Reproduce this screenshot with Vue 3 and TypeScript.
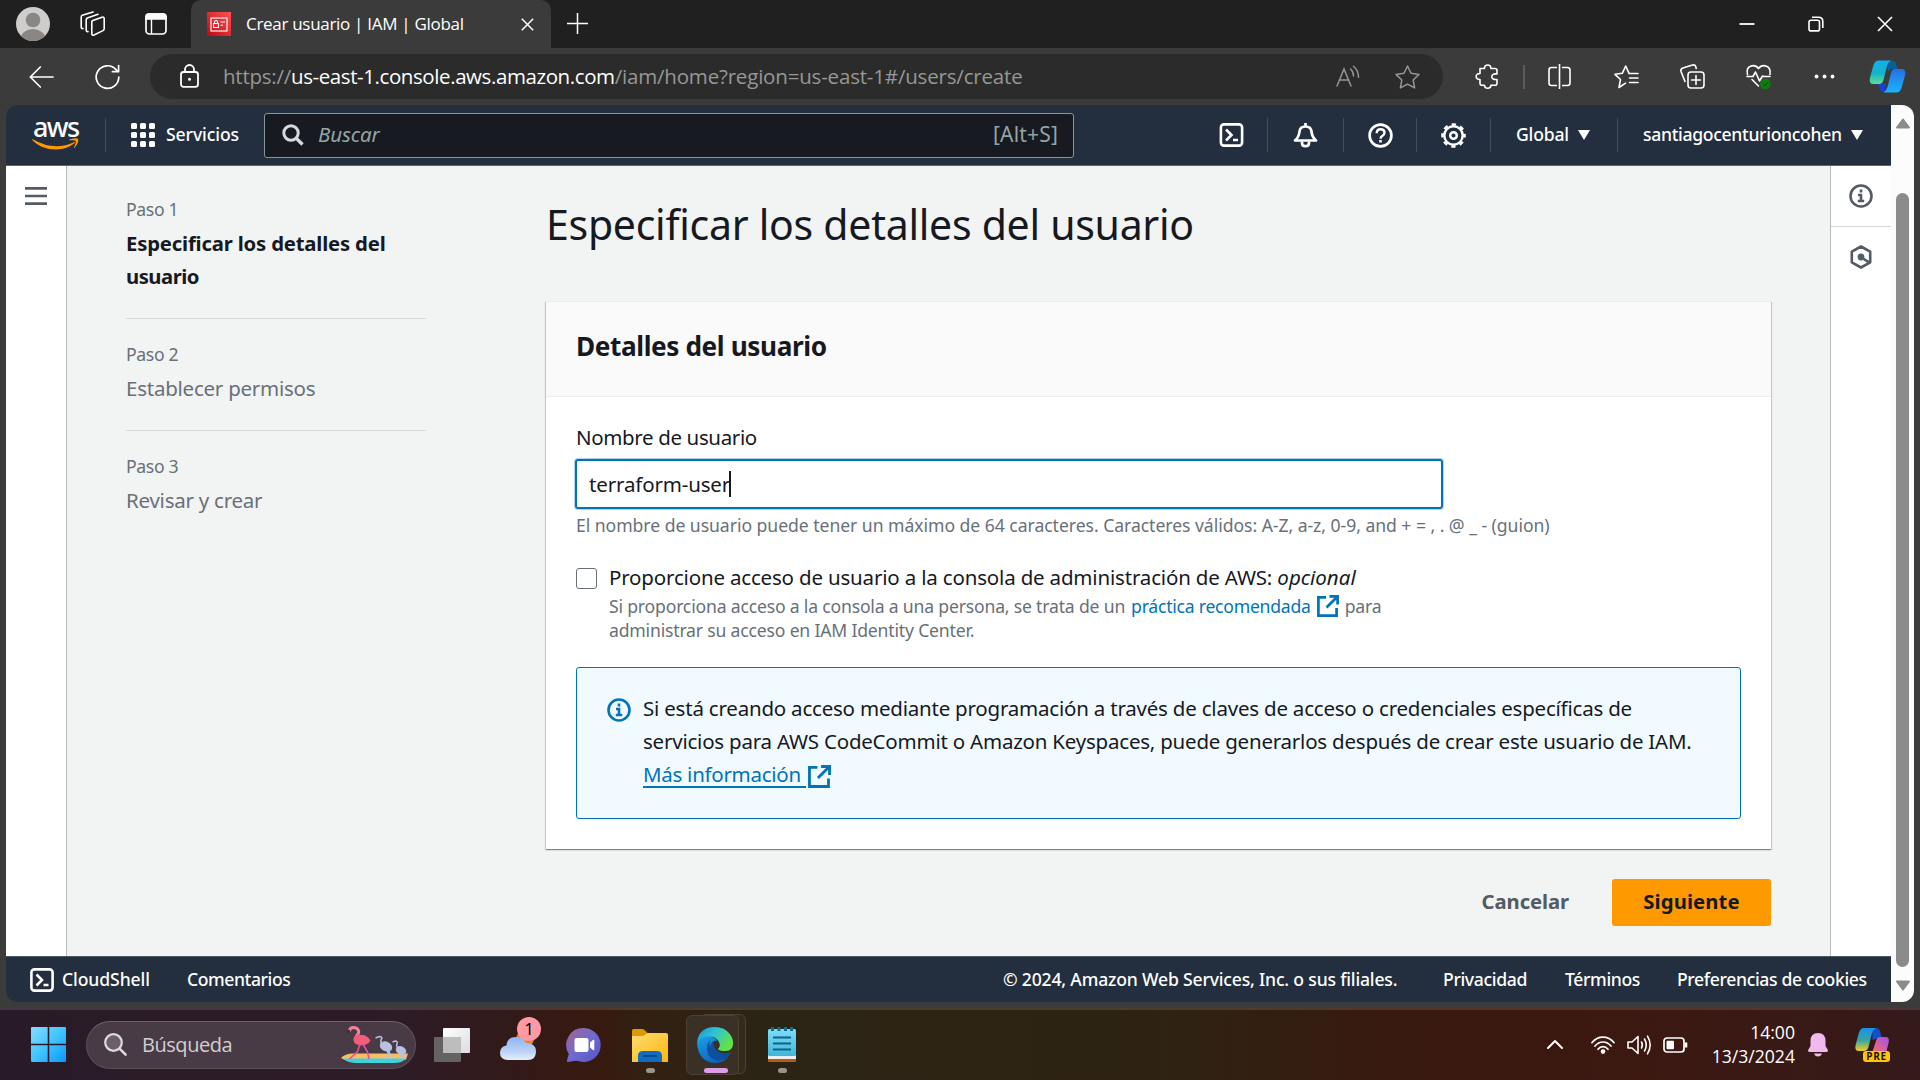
<script setup lang="ts">
interface Step {
  label: string
  title: string[]
  active: boolean
}

const steps: Step[] = [
  { label: 'Paso 1', title: ['Especificar los detalles del', 'usuario'], active: true },
  { label: 'Paso 2', title: ['Establecer permisos'], active: false },
  { label: 'Paso 3', title: ['Revisar y crear'], active: false },
]

const dots: number[] = [0, 1, 2, 3, 4, 5, 6, 7, 8]
</script>

<template>
  <div class="screen">
    <!-- Browser tab strip -->
    <div class="tabstrip">
      <svg class="avatar" width="34" height="34" viewBox="0 0 34 34">
        <defs><clipPath id="av"><circle cx="17" cy="17" r="17" /></clipPath></defs>
        <g clip-path="url(#av)">
          <rect width="34" height="34" fill="#cfcdcb" />
          <circle cx="17" cy="13" r="7.3" fill="#8a8684" />
          <ellipse cx="17" cy="32" rx="12.5" ry="10" fill="#8a8684" />
        </g>
      </svg>
      <svg class="workspaces" width="26" height="26" viewBox="0 0 26 26" fill="none" stroke="#fff" stroke-width="1.6" stroke-linejoin="round" stroke-linecap="round">
        <path d="M12.8 9.6 22 6.2q2.2-.6 2.2 1.600v10q0 1.300-1.200 1.800L14 24q-2.200.8-2.200-1.400V11q0-1 1-1.400Z" />
        <path d="M8 20.600q-1.800.2-1.800-1.700V8.800q0-1.200 1.100-1.700L18 3.200" />
        <path d="M3 17.600q-1.800 0-1.800-1.700V6q0-1.200 1.100-1.700L13 .9" />
      </svg>
      <svg class="tabactions" width="22" height="22" viewBox="0 0 22 22" fill="none" stroke="#fff" stroke-width="1.700">
        <rect x="1" y="1" width="20" height="20" rx="3.500" />
        <path d="M1 3.500Q1 1 3.500 1h15Q21 1 21 3.500V6H1Z" fill="#fff" />
        <path d="M6.500 6v15" stroke-width="1.400" />
      </svg>
      <div class="tab">
        <svg width="24" height="24" viewBox="0 0 24 24">
          <defs><linearGradient id="fav" x1="0" y1="1" x2="1" y2="0"><stop offset="0" stop-color="#bd0816" /><stop offset="1" stop-color="#ff5252" /></linearGradient></defs>
          <rect width="24" height="24" fill="url(#fav)" />
          <g fill="none" stroke="#fff" stroke-width="1.100">
            <rect x="4" y="6" width="16" height="13" />
            <rect x="6.500" y="11.500" width="5" height="4" />
            <path d="M7.500 11.500V9.800q0-1.300 1.500-1.300t1.500 1.300v1.700M13.500 10h4.500M13.500 13.300h2.500" />
          </g>
        </svg>
        <span class="tab-title">Crear usuario | IAM | Global</span>
        <svg class="tab-close" width="13" height="13" viewBox="0 0 13 13" stroke="#fff" stroke-width="1.500"><path d="M.8.8l11.400 11.400M12.200.8.8 12.200" /></svg>
      </div>
      <svg class="newtab" width="21" height="21" viewBox="0 0 21 21" stroke="#fff" stroke-width="1.500"><path d="M10.500 0v21M0 10.500h21" /></svg>
      <div class="winbtns">
        <svg width="16" height="16" viewBox="0 0 16 16" stroke="#fff" stroke-width="1.800"><path d="M.5 8h15" /></svg>
        <svg width="16" height="16" viewBox="0 0 16 16" fill="none" stroke="#fff" stroke-width="1.600"><rect x="1" y="4.200" width="10.500" height="10.700" rx="2" /><path d="M4 1.200h6.500q4.300 0 4.300 4.300V12" /></svg>
        <svg width="16" height="16" viewBox="0 0 16 16" stroke="#fff" stroke-width="1.600"><path d="M1 1l14 14M15 1 1 15" /></svg>
      </div>
    </div>

    <!-- Browser toolbar -->
    <div class="toolbar">
      <svg class="back" width="25" height="22" viewBox="0 0 25 22" fill="none" stroke="#fff" stroke-width="1.700" stroke-linecap="round" stroke-linejoin="round"><path d="M24 11H1.300M11.300 1 1.300 11l10 10" /></svg>
      <svg class="reload" width="25" height="26" viewBox="0 0 25 26" fill="none" stroke="#fff" stroke-width="1.700" stroke-linecap="round" stroke-linejoin="round"><path d="M23.800 13A11.300 11.300 0 1 1 21 5.600l2.500 2M23.600 1.500v6.200h-6.200" /></svg>
      <div class="omnibox">
        <svg class="lock" width="19" height="24" viewBox="0 0 19 24" fill="none" stroke="#fff" stroke-width="1.800"><rect x="1" y="8" width="17" height="14.800" rx="2.500" /><path d="M5 8V5.500a4.500 4.500 0 0 1 9 0V8" /><circle cx="9.500" cy="15.300" r="1.500" fill="#fff" stroke="none" /></svg>
        <span class="url"><span class="u1">https://</span><span class="u2">us-east-1.console.aws.amazon.com</span><span class="u3">/iam/home?region=us-east-1#/users/create</span></span>
        <svg class="readaloud" width="24" height="24" viewBox="0 0 24 24" fill="none" stroke="#959595" stroke-width="1.500" stroke-linecap="round"><path d="M1 21 8 4l7 17M3.700 15h8.700M14.500 4q3 2.500 3 7M17.500 1.200q5 4.300 5 11" /></svg>
        <svg class="star" width="25" height="24" viewBox="0 0 25 24" fill="none" stroke="#959595" stroke-width="1.500" stroke-linejoin="round"><path d="m12.500 1 3.500 7.300 8 1.100-5.800 5.600 1.400 7.900-7.100-3.800-7.100 3.800 1.400-7.900L1 9.400l8-1.100Z" /></svg>
      </div>
      <svg class="puzzle" width="24" height="25" viewBox="0 0 24 25" fill="none" stroke="#fff" stroke-width="1.600" stroke-linejoin="round"><path d="M5 4.500h4.500q0-3.500 3.200-3.500t3.200 3.500H20q2 0 2 2V10q-5.200-.6-5.200 2.700T22 15.500v3.700q0 2-2 2h-4.100q0 3-3.200 3t-3.200-3H7q-2 0-2-2v-3.700q-3.800 0-3.800-3T5 9.500Z" /></svg>
      <i class="tsep"></i>
      <svg class="split" width="23" height="25" viewBox="0 0 23 25" fill="none" stroke="#fff" stroke-width="1.600"><path d="M9 3.500H3.500q-2.500 0-2.500 2.500v13q0 2.500 2.500 2.500H9M14 3.500h5.500q2.500 0 2.500 2.500v13q0 2.500-2.500 2.500H14M11.500 0v25" /></svg>
      <svg class="favs" width="25" height="24" viewBox="0 0 25 24" fill="none" stroke="#fff" stroke-width="1.600" stroke-linejoin="round" stroke-linecap="round"><path d="M11.500 18.200 5 22.500l1.500-8L1 9.300l7.300-1L11.700 1l3.300 7.300M15.500 8.500H24M15.500 13H24M15.500 17.500H24" /></svg>
      <svg class="collections" width="25" height="25" viewBox="0 0 25 25" fill="none" stroke="#fff" stroke-width="1.600" stroke-linejoin="round" stroke-linecap="round"><rect x="8" y="8" width="16" height="16" rx="3" /><path d="M16 11.500v9M11.500 16h9M5 17.500 1 7.500Q.3 5 2.800 4L12.500 1q2.500-.6 3.300 1.700l.4 1.800" /></svg>
      <svg class="heart" width="26" height="26" viewBox="0 0 26 26" fill="none" stroke="#fff" stroke-width="1.600" stroke-linejoin="round" stroke-linecap="round"><path d="M1.500 10.500Q0 4 4.500 2.200 9.500.3 12.500 4.500 15.500.3 20.500 2.200 25 4 24 10.500M1 12.500h6l2.500-4.500 4 9 3-5 1 .5H24M6 15.500l6.500 6.500" /><circle cx="19.500" cy="20" r="5.400" fill="#0f7b0f" stroke="none" /><path d="m17 20 1.800 1.800 3.400-3.600" stroke="#053f05" stroke-width="1" /></svg>
      <svg class="more" width="21" height="5" viewBox="0 0 21 5" fill="#fff"><circle cx="2.500" cy="2.500" r="1.900" /><circle cx="10.500" cy="2.500" r="1.900" /><circle cx="18.500" cy="2.500" r="1.900" /></svg>
      <svg class="copilot" width="37" height="33" viewBox="0 0 37 33">
        <defs>
          <linearGradient id="cp1" x1="0" y1="0" x2="0" y2="1"><stop offset="0" stop-color="#12aeea" /><stop offset=".55" stop-color="#13b4cc" /><stop offset="1" stop-color="#5fe08f" /></linearGradient>
          <linearGradient id="cp2" x1="0" y1="0" x2="0" y2="1"><stop offset="0" stop-color="#2a6fe0" /><stop offset="1" stop-color="#18b4ff" /></linearGradient>
        </defs>
        <path d="M18 1h5q3.500 0 4.500 4l1 4h-5q-3 0-4.500 3Z" fill="#0c5f96" />
        <path d="M9 24h8l-1 8h-1.500q-3 0-4-3.500Z" fill="#1b3fd6" />
        <path d="M9.500.5H22q-3 1.500-4 5.500l-3.500 14q-1 4-4.500 4H4.500Q0 24 .8 18.500L4.500 5Q6 .5 9.500.5Z" fill="url(#cp1)" />
        <path d="M27.500 32.500H14.500q3-1.500 4-5.500L22 13q1-4 4.500-4h6q4.500 0 3.700 5.500L32.500 28q-1.500 4.500-5 4.500Z" fill="url(#cp2)" />
      </svg>
    </div>

    <!-- Web page -->
    <div class="viewport">
      <div class="page">
        <header class="aws-header">
          <div class="logo">
            <span>aws</span>
            <svg width="48" height="14" viewBox="0 0 48 14"><path d="M.8 2.200Q22 14.500 42 5.200q1.500-.5.700.9Q35 12.500 24 12.500 9 12.500.4 3.200-.3 2 .8 2.200Z" fill="#f90" /><path d="M37.500 2.600q6.800-2.500 8.500-.6 1.600 2.200-3.300 8.700-1 .7-.7-.3 2.300-5.500 1.700-6.500-.9-1-6.200-.6-.9-.1 0-.7Z" fill="#f90" /></svg>
          </div>
          <i class="hsep s1"></i>
          <div class="waffle"><b v-for="d in dots" :key="d"></b></div>
          <span class="servicios">Servicios</span>
          <div class="search">
            <svg width="22" height="22" viewBox="0 0 22 22" fill="none" stroke="#d5dbdb" stroke-width="3"><circle cx="9" cy="9" r="7.200" /><path d="m14 14 6.500 6.500" stroke-width="3.400" /></svg>
            <span class="ph">Buscar</span>
            <span class="kbd">[Alt+S]</span>
          </div>
          <svg class="h-cs" width="25" height="24" viewBox="0 0 24 24" fill="none" stroke="#fff" stroke-width="2.600"><rect x="1.400" y="1.400" width="21.200" height="21.200" rx="3" /><path d="m6.500 6.500 5.500 5.500-5.500 5.500" /><path d="M13.500 17h5" /></svg>
          <i class="hsep s2"></i>
          <svg class="h-bell" width="25" height="25" viewBox="0 0 25 25" fill="none" stroke="#fff" stroke-width="2.700" stroke-linejoin="round"><path d="M2 17.500q4-3.500 4.500-9Q7 3.500 12.500 3.500t6 5q.5 5.500 4.500 9Z" /><path d="M12.500 0v4" /><path d="M9 18.500v1.500q0 3.200 3.500 3.200T16 20v-1.500" /></svg>
          <i class="hsep s3"></i>
          <svg class="h-help" width="25" height="25" viewBox="0 0 25 25" fill="none" stroke="#fff" stroke-width="2.700"><circle cx="12.500" cy="12.500" r="10.900" /><path d="M8.700 10.200q0-4 3.900-4 3.900 0 3.900 3.300 0 2-2 3.200-2 1.100-2 3.100" stroke-width="2.400" /><path d="M12.500 17v2.600" stroke-width="2.600" /></svg>
          <i class="hsep s4"></i>
          <svg class="h-gear" width="25" height="25" viewBox="0 0 25 25" fill="none" stroke="#fff"><circle cx="12.500" cy="12.500" r="9.200" stroke-width="2.400" /><circle cx="12.500" cy="12.500" r="11" stroke-width="2.600" stroke-dasharray="4.320 4.320" stroke-dashoffset="2.160" /><circle cx="12.500" cy="12.500" r="3.300" stroke-width="2.500" /></svg>
          <i class="hsep s5"></i>
          <span class="region">Global</span>
          <svg class="caret c1" width="12" height="10" viewBox="0 0 12 10"><path d="M0 0h12L6 10Z" fill="#fff" /></svg>
          <i class="hsep s6"></i>
          <span class="account">santiagocenturioncohen</span>
          <svg class="caret c2" width="12" height="10" viewBox="0 0 12 10"><path d="M0 0h12L6 10Z" fill="#fff" /></svg>
        </header>

        <div class="body">
          <aside class="rail left">
            <svg width="22" height="18" viewBox="0 0 22 18" stroke="#545b64" stroke-width="2.600"><path d="M0 1.400h22M0 9h22M0 16.600h22" /></svg>
          </aside>

          <nav class="steps">
            <div v-for="s in steps" :key="s.label" class="step" :class="{ active: s.active }">
              <small>{{ s.label }}</small>
              <span v-for="t in s.title" :key="t">{{ t }}</span>
            </div>
          </nav>

          <main class="content">
            <h1>Especificar los detalles del usuario</h1>
            <section class="card">
              <h2>Detalles del usuario</h2>
              <div class="card-body">
                <label class="name">Nombre de usuario</label>
                <div class="input"><span>terraform-user</span><i></i></div>
                <p class="hint">El nombre de usuario puede tener un máximo de 64 caracteres. Caracteres válidos: A-Z, a-z, 0-9, and + = , . @ _ - (guion)</p>
                <div class="check">
                  <div class="box"></div>
                  <div>
                    <div class="check-label">Proporcione acceso de usuario a la consola de administración de AWS: <em>opcional</em></div>
                    <div class="desc">
                      <span>Si proporciona acceso a la consola a una persona, se trata de un</span>
                      <a>práctica recomendada</a>
                      <svg width="22" height="22" viewBox="0 0 22 22" fill="none" stroke="#0073bb" stroke-width="2.700"><path d="M9 2.300H1.400v18.300h18.200V13M12.500 1.400h8.100v8.100M20 2 9.500 12.500" /></svg>
                      <span>para</span>
                    </div>
                    <div class="desc">administrar su acceso en IAM Identity Center.</div>
                  </div>
                </div>
                <div class="alert">
                  <svg class="ai" width="24" height="24" viewBox="0 0 24 24" fill="none" stroke="#0073bb" stroke-width="2.600"><circle cx="12" cy="12" r="10.500" /><path d="M12 5.500v3M9 11h3v5.500M8.800 17h6.400" /></svg>
                  <div class="alert-text">
                    <div class="l1">Si está creando acceso mediante programación a través de claves de acceso o credenciales específicas de</div>
                    <div class="l2">servicios para AWS CodeCommit o Amazon Keyspaces, puede generarlos después de crear este usuario de IAM.</div>
                    <div class="more-link">
                      <a>Más información</a>
                      <svg width="23" height="23" viewBox="0 0 22 22" fill="none" stroke="#0073bb" stroke-width="2.700"><path d="M9 2.300H1.400v18.300h18.200V13M12.500 1.400h8.100v8.100M20 2 9.500 12.500" /></svg>
                    </div>
                  </div>
                </div>
              </div>
            </section>
            <div class="actions">
              <span class="cancel">Cancelar</span>
              <button class="next">Siguiente</button>
            </div>
          </main>

          <aside class="rail right">
            <div class="ri">
              <svg width="24" height="24" viewBox="0 0 24 24" fill="none" stroke="#545b64" stroke-width="2.600"><circle cx="12" cy="12" r="10.500" /><path d="M12 5.500v3M9 11h3v5.500M8.800 17h6.400" /></svg>
            </div>
            <div class="ri second">
              <svg width="24" height="24" viewBox="0 0 24 24" fill="none" stroke="#545b64" stroke-width="2.600" stroke-linejoin="round"><path d="m12 1.500 9.200 5.200v10.600L12 22.500l-9.200-5.200V6.700Z" /><circle cx="12" cy="12" r="3.400" fill="#545b64" stroke="none" /><path d="m12.500 12.500 7.500 4.800" /></svg>
            </div>
          </aside>
        </div>

        <footer class="aws-footer">
          <svg class="fcs" width="24" height="24" viewBox="0 0 24 24" fill="none" stroke="#fff" stroke-width="2.600"><rect x="1.400" y="1.400" width="21.200" height="21.200" rx="3" /><path d="m6.500 6.500 5.500 5.500-5.500 5.500" /><path d="M13.500 17h5" /></svg>
          <span class="f1">CloudShell</span>
          <span class="f2">Comentarios</span>
          <span class="f3">© 2024, Amazon Web Services, Inc. o sus filiales.</span>
          <span class="f4">Privacidad</span>
          <span class="f5">Términos</span>
          <span class="f6">Preferencias de cookies</span>
        </footer>
      </div>
      <div class="scrollbar">
        <svg width="16" height="11" viewBox="0 0 16 11"><path d="M8 1.500 14 9.500H2Z" fill="#8b8b8b" stroke="#8b8b8b" stroke-width="2" stroke-linejoin="round" /></svg>
        <div class="thumb"></div>
        <svg width="16" height="11" viewBox="0 0 16 11"><path d="M8 9.500 14 1.500H2Z" fill="#8b8b8b" stroke="#8b8b8b" stroke-width="2" stroke-linejoin="round" /></svg>
      </div>
    </div>

    <!-- Windows taskbar -->
    <div class="taskbar">
      <svg class="start" width="35" height="35" viewBox="0 0 35 35">
        <defs><linearGradient id="win" x1="0" y1="0" x2="1" y2="1"><stop offset="0" stop-color="#86dcff" /><stop offset=".5" stop-color="#41c4ff" /><stop offset="1" stop-color="#0798fb" /></linearGradient></defs>
        <path d="M1 0h15.700v16.700H0V1Q0 0 1 0Zm17.300 0H34q1 0 1 1v15.700H18.300ZM0 18.300h16.700V35H1q-1 0-1-1Zm18.300 0H35V34q0 1-1 1H18.300Z" fill="url(#win)" />
      </svg>
      <div class="tsearch">
        <svg class="mag" width="23" height="23" viewBox="0 0 23 23" fill="none" stroke="#dedade" stroke-width="2.200" stroke-linecap="round"><circle cx="9.500" cy="9.500" r="8.300" fill="#6a606c" /><path d="m15.800 15.800 5.800 5.800" stroke-width="2.600" /></svg>
        <span>Búsqueda</span>
        <svg class="birds" width="67" height="37" viewBox="0 0 67 37">
          <path d="M0 32q4-4.500 12-4.500h55l-2 6q-30 3-58 1.500Q3 34 0 32Z" fill="#f6bf66" />
          <path d="M2 32.500h63q-4 4.500-12 4.500H16q-9 0-14-4.500Z" fill="#3cd3dc" />
          <path d="M15.500 10q3-3 2-5.500T13 1.500 8.500 4.500" fill="none" stroke="#f58296" stroke-width="3" stroke-linecap="round" />
          <path d="m8.500 4-1.300 2.500" stroke="#2d2530" stroke-width="1.800" />
          <path d="M17.500 8q-6 2-5 6.500t8 5q6.500-.5 9-5-4-6-9-5.500-2 .2-3-1Z" fill="#f45c7c" />
          <path d="m19 18-2.500 7.500-8 7.500M22 18l4.500 8 1.500 7" fill="none" stroke="#e94d9b" stroke-width="1.600" />
          <g fill="#b9c0e0" stroke="#b9c0e0"><ellipse cx="45" cy="20.500" rx="6" ry="4.300" transform="rotate(25 45 20.500)" /><path d="M41 18q-2-3-.5-5t-2-2.500l-4 1.500M46 24l1.500 4-4 5M48 24l1.500 9" fill="none" stroke-width="1.500" /><ellipse cx="60" cy="24.500" rx="5" ry="3.600" transform="rotate(25 60 24.500)" /><path d="M56.500 22q-1.500-2-.5-4.500t-2-2.500l-2.500 1M60 28l1 2-2.500 3M62.500 28l1 5" fill="none" stroke-width="1.500" /></g>
        </svg>
      </div>
      <svg class="taskview" width="36" height="34" viewBox="0 0 36 34">
        <defs><linearGradient id="tv" x1="0" y1="0" x2="1" y2="1"><stop offset="0" stop-color="#fff" /><stop offset="1" stop-color="#dcdcdc" /></linearGradient></defs>
        <rect x="9" width="27" height="25" rx="1" fill="url(#tv)" /><rect y="9" width="27" height="25" rx="1" fill="#6a6a6a" opacity=".9" /><path d="M9 9h17q1 0 1 1v15H9Z" fill="#bdbdbd" />
      </svg>
      <div class="weather">
        <svg width="36" height="30" viewBox="0 0 36 30">
          <defs><linearGradient id="cl" x1="0" y1="0" x2="0" y2="1"><stop offset="0" stop-color="#8fb4f5" /><stop offset=".6" stop-color="#b9d1f5" /><stop offset="1" stop-color="#e4effb" /></linearGradient></defs>
          <circle cx="25" cy="9" r="8.800" fill="#f5821f" />
          <path d="M8 30q-8-.5-8-7t6.500-7.500Q7 7 16 7q7.500 0 10 6 10 0 10 8.500T28 30Z" fill="url(#cl)" />
        </svg>
        <span class="badge">1</span>
      </div>
      <svg class="chat" width="34" height="34" viewBox="0 0 34 34">
        <defs><linearGradient id="ch" x1="0" y1="0" x2="1" y2="1"><stop offset="0" stop-color="#a5628f" /><stop offset=".5" stop-color="#6f6bd0" /><stop offset="1" stop-color="#5453c8" /></linearGradient></defs>
        <path d="M17 0a17 17 0 1 1-6 33q-2-.7-4 0L1 34q-1.500 0-1-1.500L1.800 26A17 17 0 0 1 17 0Z" fill="url(#ch)" /><rect x="7.500" y="10" width="14" height="14" rx="2" fill="#fff" /><path d="m23 14.500 3-2.500q1.300-.7 1.300.8v8.400q0 1.500-1.300.8l-3-2.500Z" fill="#fff" />
      </svg>
      <svg class="folder" width="36" height="33" viewBox="0 0 36 33">
        <defs><linearGradient id="fo" x1="0" y1="0" x2="1" y2="1"><stop offset="0" stop-color="#ffdc6e" /><stop offset="1" stop-color="#fcb712" /></linearGradient></defs>
        <path d="M0 1.500Q0 0 1.500 0H10q1.500 0 2.500 1l3 3v6H0Z" fill="#d99a06" /><path d="M0 7h10q2 0 3.500-1.500L15.500 4H34q2 0 2 2v27H0Z" fill="url(#fo)" /><path d="M6 33v-6q0-5 5-5h14q5 0 5 5v6Z" fill="#0f6cc0" /><path d="M11 27h14" stroke="#083f78" stroke-width="1.500" />
      </svg>
      <div class="edge-stack"></div>
      <div class="edge-tile">
        <svg width="36" height="36" viewBox="0 0 36 36">
          <defs>
            <linearGradient id="e1" x1="0" y1="0" x2="1" y2=".5"><stop offset="0" stop-color="#1b93dd" /><stop offset=".5" stop-color="#2fc4d2" /><stop offset="1" stop-color="#62e246" /></linearGradient>
            <linearGradient id="e2" x1="0" y1="0" x2=".6" y2="1"><stop offset="0" stop-color="#1e9fe6" /><stop offset="1" stop-color="#0a62c0" /></linearGradient>
          </defs>
          <path d="M0 17Q1 0 18 0q9 0 14 6t4 12q-1 6-8 6-6 0-7-2 3-3 1-7-3-6-11-5Q3 11 0 17Z" fill="url(#e1)" />
          <path d="M0 17Q3 9.500 11 9.500q6 0 9.500 4Q14 13 13.500 20q0 8 8 10.500 6 1 11-3Q28 36 18 36 2 35 0 17Z" fill="url(#e2)" />
          <path d="M13.500 20q0-4 3.500-6-1 6 3.500 10 5 4 12 1.500 1.500 0 .5 1.800Q28 34 21 33.500q-10-1-11-11Q9.500 16 14 12q-3 4-.5 8Z" fill="#0c4f9e" />
        </svg>
      </div>
      <svg class="notepad" width="28" height="35" viewBox="0 0 28 35">
        <defs><linearGradient id="np" x1="0" y1="0" x2="0" y2="1"><stop offset="0" stop-color="#7fdcf7" /><stop offset="1" stop-color="#3fb6d8" /></linearGradient></defs>
        <rect y="28" width="28" height="7" rx="1" fill="#b85a12" /><rect y="26" width="28" height="6" fill="#e9eef2" /><rect y="2" width="28" height="27" rx="1.500" fill="url(#np)" /><path d="M5 10.500h18M5 16.500h18M5 22.500h18" stroke="#0b6387" stroke-width="2" /><path d="M4.500 0v4M11 0v4M17.500 0v4M23.500 0v4" stroke="#0d6f8f" stroke-width="3" />
      </svg>
      <i class="run r1"></i><i class="run r2"></i><i class="run r3"></i>
      <div class="tray">
        <svg class="chev" width="16" height="9" viewBox="0 0 16 9" fill="none" stroke="#fff" stroke-width="2" stroke-linecap="round" stroke-linejoin="round"><path d="m1 8 7-7 7 7" /></svg>
        <svg class="wifi" width="24" height="18" viewBox="0 0 24 18" fill="none" stroke="#fff" stroke-width="1.700" stroke-linecap="round"><path d="M.9 6.700Q5.500 1.200 12 1.200t11.100 5.500M4 10q3.400-4 8-4t8 4M7 13.300q2-2.700 5-2.700t5 2.700" /><circle cx="12" cy="15.600" r="2.300" fill="#fff" stroke="none" /></svg>
        <svg class="vol" width="24" height="20" viewBox="0 0 24 20" fill="none" stroke="#fff" stroke-width="1.600" stroke-linecap="round" stroke-linejoin="round"><path d="M1 7h4l6-5.500v17L5 13H1ZM14.500 7q1.700 3 0 6M17.500 4q3.500 6 0 12M20.500 1.200q5.300 8.800 0 17.600" /></svg>
        <svg class="bat" width="25" height="16" viewBox="0 0 25 16" fill="none" stroke="#fff" stroke-width="1.700"><rect x="1" y="1" width="20" height="14" rx="3" /><rect x="3.500" y="3.800" width="7.500" height="8.500" rx="1" fill="#fff" stroke="none" /><path d="M23 5.500v5" stroke-width="2.600" /></svg>
        <div class="clock"><span>14:00</span><span>13/3/2024</span></div>
        <svg class="tbell" width="20" height="24" viewBox="0 0 20 24" fill="#f0b9f0"><path d="M10 0Q2.500 0 2.500 8v5L0 17.300Q-.2 19 1.500 19h17q1.700 0 1.500-1.700L17.500 13V8q0-8-7.500-8ZM6 20.500h8Q13 23.500 10 23.500T6 20.500Z" /></svg>
        <div class="pre">
          <svg width="34" height="25" viewBox="0 0 34 25">
            <defs><linearGradient id="p1" x1="0" y1="0" x2="0" y2="1"><stop offset="0" stop-color="#1a8ff0" /><stop offset=".55" stop-color="#3aa7a0" /><stop offset="1" stop-color="#f2cf1d" /></linearGradient><linearGradient id="p2" x1="1" y1="0" x2="0" y2="1"><stop offset="0" stop-color="#a052f0" /><stop offset="1" stop-color="#ff6d5f" /></linearGradient></defs>
            <path d="M17 0h4q3.500 0 4.500 5l1 4-9 3Z" fill="#1650c8" /><path d="M8.500 0H21q-3 1.500-4 5l-3.500 14q-1 4-5 4H4Q-.5 23 .5 17.500L4 4.500Q5.500 0 8.500 0Z" fill="url(#p1)" /><path d="M17 25 21 13q1-4 4-4h5.500q4 0 3.300 5L31 25Z" fill="url(#p2)" />
          </svg>
          <span>PRE</span>
        </div>
      </div>
    </div>
  </div>
</template>

<style>
html,
body {
  margin: 0;
  background: #3b3b3b;
  overflow: hidden;
}
</style>

<style scoped>
.screen {
  width: 1920px;
  height: 1080px;
  display: flex;
  flex-direction: column;
  overflow: hidden;
  background: #3b3b3b;
  font-family: 'Noto Sans', 'Open Sans', sans-serif;
  white-space: nowrap;
}
.screen * {
  box-sizing: border-box;
}
svg {
  display: block;
  flex: none;
  overflow: visible;
}
i {
  display: block;
  flex: none;
}

/* tab strip */
.tabstrip {
  height: 48px;
  flex: none;
  display: flex;
  align-items: center;
  background: #202020;
}
.avatar { margin-left: 16px; }
.workspaces { margin-left: 30px; }
.tabactions { margin-left: 39px; }
.tab {
  margin-left: 24px;
  width: 360px;
  height: 48px;
  padding: 0 17px 0 16px;
  display: flex;
  align-items: center;
  background: #3b3b3b;
  border-radius: 10px 10px 0 0;
}
.tab-title {
  margin-left: 15px;
  padding-bottom: 1px;
  font: 17px/24px 'Open Sans', sans-serif;
  letter-spacing: -0.3px;
  color: #fff;
}
.tab-close { margin-left: auto; }
.newtab { margin-left: 16px; margin-bottom: 1px; }
.winbtns {
  margin-left: auto;
  margin-right: 27px;
  display: flex;
  gap: 53px;
}

/* toolbar */
.toolbar {
  height: 57px;
  flex: none;
  display: flex;
  align-items: center;
  background: #3b3b3b;
}
.back { margin-left: 29px; }
.reload { margin-left: 41px; }
.omnibox {
  margin-left: 30px;
  width: 1293px;
  height: 45px;
  border-radius: 23px;
  background: #2b2b2b;
  display: flex;
  align-items: center;
}
.lock { margin: 0 0 1px 30px; }
.url {
  margin-left: 24px;
  padding-bottom: 2px;
  font: 20.5px/28px 'Open Sans', sans-serif;
  color: #979797;
}
.u1 { letter-spacing: -0.24px; }
.u2 { letter-spacing: -0.41px; color: #fff; }
.u3 { letter-spacing: -0.18px; }
.readaloud { margin-left: auto; }
.star { margin: 0 23px 0 35px; }
.puzzle { margin-left: 32px; }
.tsep { width: 2px; height: 24px; background: #5c5c5c; margin-left: 24px; }
.split { margin-left: 23px; }
.favs { margin-left: 43px; }
.collections { margin-left: 41px; }
.heart { margin-left: 41px; }
.more { margin-left: 42px; }
.copilot { margin-left: 34px; }

/* page viewport */
.viewport {
  margin: 0 6px;
  width: 1908px;
  height: 897px;
  flex: none;
  display: flex;
  border-radius: 12px;
  overflow: hidden;
}
.page {
  width: 1885px;
  display: flex;
  flex-direction: column;
}
.aws-header {
  height: 61px;
  flex: none;
  display: flex;
  align-items: center;
  background: #232f3e;
  border-bottom: 1px solid #5d6570;
  color: #fff;
  font-size: 17.6px;
  font-weight: 500;
}
.aws-header > span,
.search > span { padding-bottom: 2px; }
.logo { margin-left: 26px; width: 48px; }
.logo span {
  display: block;
  padding-left: 1px;
  font-size: 27px;
  line-height: 16px;
  height: 21px;
  letter-spacing: -1.6px;
}
.logo svg { margin-top: -3px; height: 14px; }
.hsep { width: 1px; height: 34px; background: #414d5c; }
.s1 { margin-left: 25px; }
.waffle {
  margin-left: 25px;
  display: grid;
  grid-template-columns: repeat(3, 6px);
  gap: 3px;
}
.waffle b { height: 6px; background: #fff; border-radius: 1.500px; }
.servicios { margin-left: 11px; width: 73px; letter-spacing: -0.1px; }
.search {
  margin-left: 25px;
  width: 810px;
  height: 45px;
  padding: 0 15px 0 17px;
  border: 1px solid #879596;
  border-radius: 3px;
  background: #171a21;
  display: flex;
  align-items: center;
  color: #95a5a6;
  font-weight: 400;
}
.ph { margin-left: 14px; font-size: 20.5px; font-style: italic; letter-spacing: -0.1px; }
.kbd { margin-left: auto; font-size: 21px; letter-spacing: 0.17px; }
.h-cs { margin-left: 145px; }
.s2 { margin-left: 23px; }
.h-bell { margin-left: 25px; }
.s3 { margin-left: 25px; }
.h-help { margin-left: 24px; }
.s4 { margin-left: 23px; }
.h-gear { margin-left: 24px; }
.s5 { margin-left: 24px; }
.region { margin-left: 25px; width: 53px; letter-spacing: -0.18px; }
.c1 { margin-left: 9px; }
.s6 { margin-left: 27px; }
.account { margin-left: 25px; width: 199px; letter-spacing: -0.33px; }
.c2 { margin-left: 9px; }

.body {
  height: 790px;
  flex: none;
  display: flex;
  background: #f2f3f3;
}
.rail { background: #fff; flex: none; }
.left {
  width: 61px;
  border-right: 1px solid #b4bbbb;
  padding: 21px 0 0 19px;
}
.right {
  width: 61px;
  margin-left: auto;
  border-left: 1px solid #b4bbbb;
}
.ri {
  height: 61px;
  display: flex;
  align-items: center;
  justify-content: center;
  border-bottom: 1px solid #d0d5d5;
}
.ri.second { height: 60px; border: none; }

.steps { margin-left: 59px; width: 300px; padding-top: 8px; flex: none; }
.step {
  padding: 23px 0 25px;
  display: flex;
  flex-direction: column;
  color: #687078;
  font-size: 20.5px;
  line-height: 33px;
  letter-spacing: -0.24px;
}
.step + .step { border-top: 1px solid #d5dbdb; }
.step small {
  font-size: 17.6px;
  line-height: 24px;
  margin-bottom: 6px;
  letter-spacing: -0.32px;
}
.step.active > span {
  color: #16191f;
  font-weight: 700;
  font-size: 20.3px;
  letter-spacing: -0.18px;
}
.step.active > span:last-child { letter-spacing: -0.5px; }

.content { margin-left: 120px; width: 1225px; padding-top: 28px; flex: none; }
h1 {
  margin: 0;
  font-size: 41px;
  line-height: 60px;
  font-weight: 400;
  letter-spacing: -0.27px;
  color: #16191f;
}
.card {
  margin-top: 47px;
  height: 548px;
  background: #fff;
  border-top: 1px solid #eaeded;
  box-shadow: 0 1px 1px 0 rgba(0, 28, 36, 0.3), 1px 1px 1px 0 rgba(0, 28, 36, 0.15), -1px 1px 1px 0 rgba(0, 28, 36, 0.15);
}
h2 {
  margin: 0;
  height: 95px;
  padding: 26px 30px 0;
  background: #fafafa;
  border-bottom: 1px solid #eaeded;
  font-size: 26.2px;
  line-height: 36px;
  letter-spacing: -0.4px;
  color: #16191f;
}
.card-body { padding: 24px 30px 0; color: #16191f; }
.name {
  display: block;
  font-size: 20.5px;
  line-height: 33px;
  letter-spacing: -0.36px;
}
.input {
  margin: 5px 0 0 -1px;
  width: 868px;
  height: 50px;
  padding-left: 12px;
  display: flex;
  align-items: center;
  border: 2px solid #0073bb;
  border-radius: 3px;
  box-shadow: 0 0 0 1px rgba(0, 115, 187, 0.3);
  font-size: 20.5px;
  letter-spacing: -0.15px;
}
.input span { padding-bottom: 1px; }
.input i { width: 2px; height: 26px; background: #16191f; margin-left: -1px; }
.hint {
  margin: 4px 0 0;
  font-size: 17.6px;
  line-height: 24px;
  letter-spacing: -0.045px;
  color: #687078;
}
.check { margin-top: 24px; display: flex; }
.box {
  width: 21px;
  height: 21px;
  margin: 7px 12px 0 0;
  flex: none;
  border: 1.500px solid #687078;
  border-radius: 3px;
}
.check-label { font-size: 20.5px; line-height: 33px; letter-spacing: -0.175px; }
.check-label em { letter-spacing: 0; }
.desc {
  display: flex;
  align-items: center;
  font-size: 17.6px;
  line-height: 24px;
  letter-spacing: -0.185px;
  color: #687078;
}
.desc a { margin-left: 6px; color: #0073bb; letter-spacing: -0.24px; }
.desc svg { margin: 0 6px 0 6px; }
.alert {
  margin-top: 25px;
  width: 1165px;
  height: 152px;
  padding: 24px 30px;
  display: flex;
  border: 1px solid #0073bb;
  border-radius: 3px;
  background: #f1faff;
}
.ai { margin: 6px 12px 0 0; }
.alert-text { font-size: 20.5px; line-height: 33px; }
.l1 { letter-spacing: -0.21px; }
.l2 { letter-spacing: -0.22px; }
.more-link { display: flex; align-items: flex-start; }
.more-link a {
  height: 30px;
  width: 163px;
  border-bottom: 2px solid #0073bb;
  color: #0073bb;
  letter-spacing: -0.28px;
}
.more-link svg { margin: 7px 0 0 2px; }
.actions {
  margin-top: 30px;
  display: flex;
  justify-content: flex-end;
  align-items: center;
  font-size: 20.3px;
  font-weight: 700;
}
.cancel { color: #545b64; letter-spacing: -0.1px; margin-right: 43px; padding-bottom: 3px; }
.next {
  width: 159px;
  height: 47px;
  padding: 0 0 3px;
  border: none;
  border-radius: 3px;
  background: #f90;
  color: #16191f;
  font: inherit;
  letter-spacing: 0.1px;
}

.aws-footer {
  height: 46px;
  flex: none;
  display: flex;
  align-items: center;
  background: #232f3e;
  border-top: 1px solid #4b5765;
  color: #fff;
  font-size: 17.6px;
  font-weight: 500;
}
.aws-footer span { padding-bottom: 2px; }
.fcs { margin-left: 24px; margin-top: 1px; }
.aws-footer .f1 { margin-left: 8px; padding-bottom: 1px; width: 89px; letter-spacing: -0.1px; }
.f2 { margin-left: 36px; letter-spacing: -0.42px; }
.f3 { margin-left: auto; width: 394px; letter-spacing: -0.19px; }
.f4 { margin-left: 46px; width: 84px; letter-spacing: -0.35px; }
.f5 { margin-left: 38px; width: 75px; letter-spacing: -0.36px; }
.f6 { margin-left: 37px; width: 190px; letter-spacing: -0.36px; margin-right: 24px; }

.scrollbar {
  width: 23px;
  background: #fcfcfc;
  display: flex;
  flex-direction: column;
  align-items: center;
  padding: 13px 0 11px;
}
.thumb {
  width: 13px;
  height: 774px;
  margin: 64px 0 auto;
  border-radius: 7px;
  background: #8b8b8b;
}

/* taskbar */
.taskbar {
  margin-top: 6px;
  height: 72px;
  flex: none;
  display: flex;
  align-items: center;
  position: relative;
  border-top: 2px solid rgba(255, 255, 255, 0.13);
  background: linear-gradient(90deg, #281b28 0, #2d1b26 400px, #37190f 600px, #332012 640px, #2b2414 760px, #2e2313 1150px, #38190f 1400px, #3c1811 1650px, #341a1a 1920px);
}
.start { margin: 0 0 1px 31px; }
.tsearch {
  margin: 0 0 1px 20px;
  width: 330px;
  height: 48px;
  padding: 0 7px 0 17px;
  border: 1px solid #5c4f5a;
  border-top-color: #6d616b;
  border-radius: 24px;
  background: #493b46;
  display: flex;
  align-items: center;
  color: #d2ced1;
  font: 20px/28px 'Open Sans', sans-serif;
  letter-spacing: -0.45px;
}
.tsearch span { margin-left: 15px; }
.birds { margin-left: auto; }
.taskview { margin: 0 0 1px 18px; }
.weather { margin: -16px 0 0 30px; position: relative; padding-top: 16px; }
.badge {
  position: absolute;
  left: 17px;
  top: 3px;
  width: 24px;
  height: 24px;
  border-radius: 50%;
  background: #ff99a4;
  color: #000;
  font: 17px/24px 'Open Sans', sans-serif;
  text-align: center;
}
.chat { margin: 0 0 1px 31px; }
.folder { margin-left: 31px; }
.edge-tile {
  margin: 0 0 1px 18px;
  width: 53px;
  height: 60px;
  padding-left: 5px;
  display: flex;
  align-items: center;
  justify-content: center;
  border: 1px solid #4b4233;
  border-radius: 6px;
  background: #3b3025;
  position: relative;
}
.edge-stack {
  position: absolute;
  left: 700px;
  top: 4px;
  width: 46px;
  height: 60px;
  border: 1px solid #4b4233;
  border-radius: 6px;
  background: #342b1f;
}
.notepad { margin: 0 0 1px 29px; }
.run {
  position: absolute;
  top: 58px;
  width: 9px;
  height: 5px;
  border-radius: 3px;
  background: #99948c;
}
.r1 { left: 646px; }
.r2 { left: 704px; width: 24px; background: #dc9fe6; }
.r3 { left: 778px; }
.tray { margin-left: auto; margin-right: 30px; padding-bottom: 1px; display: flex; align-items: center; color: #fff; }
.wifi { margin-left: 28px; }
.vol { margin-left: 12px; }
.bat { margin-left: 12px; }
.clock {
  width: 107px;
  padding-bottom: 2px;
  display: flex;
  flex-direction: column;
  align-items: flex-end;
  font: 17.6px/24px 'Open Sans', sans-serif;
}
.tbell { margin-left: 13px; }
.pre { margin-left: 27px; width: 35px; height: 34px; position: relative; }
.pre span {
  position: absolute;
  left: 8px;
  bottom: 0;
  width: 27px;
  height: 11px;
  border-radius: 3px;
  background: #ffc40c;
  color: #1a1408;
  font: 700 10px/11px 'Open Sans', sans-serif;
  letter-spacing: 0.6px;
  text-align: center;
}
</style>
